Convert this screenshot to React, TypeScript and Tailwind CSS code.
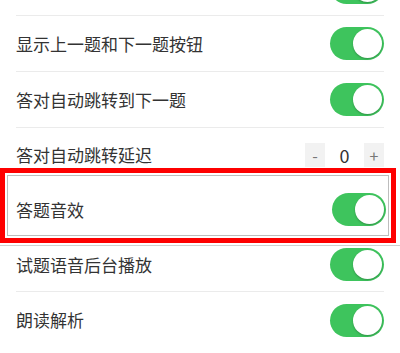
import React, { useState } from "react";

const font = { fontFamily: '"Noto Sans CJK SC", "Noto Sans", sans-serif' };

function Toggle({ on, onClick }: { on: boolean; onClick: () => void }) {
  return (
    <button
      onClick={onClick}
      className={`relative w-[54px] h-[33px] rounded-full shrink-0 transition-colors ${on ? "bg-[#3ec45d]" : "bg-[#e5e5e5]"}`}
    >
      <span
        className={`absolute top-[2px] w-[29px] h-[29px] rounded-full bg-white shadow-[0_1px_2px_rgba(0,0,0,0.25)] transition-all ${on ? "left-[23px]" : "left-[2px]"}`}
      />
    </button>
  );
}

export default function App() {
  const [flags, setFlags] = useState<Record<string, boolean>>({
    top: true, nav: true, jump: true, sound: true, bg: true, read: true,
  });
  const [delay, setDelay] = useState(0);
  const flip = (k: string) => setFlags({ ...flags, [k]: !flags[k] });

  return (
    <div className="w-[400px] h-[353px] overflow-hidden bg-white text-[#333] text-[17px]" style={font}>
      <div className="-mt-[40px]">
        {/* row scrolled off the top, only its toggle's edge shows */}
        <div className="mx-4 h-[56px] flex items-center justify-end border-b border-[#ebebeb]">
          <Toggle on={flags.top} onClick={() => flip("top")} />
        </div>
        <div className="mx-4 h-[56px] flex items-center justify-between border-b border-[#ebebeb]">
          <span>显示上一题和下一题按钮</span>
          <Toggle on={flags.nav} onClick={() => flip("nav")} />
        </div>
        <div className="mx-4 h-[56px] flex items-center justify-between border-b border-[#ebebeb]">
          <span>答对自动跳转到下一题</span>
          <Toggle on={flags.jump} onClick={() => flip("jump")} />
        </div>
        <div className="mx-4 h-[40px] pt-[15px] flex items-start justify-between">
          <span className="leading-[24px]">答对自动跳转延迟</span>
          <div className="flex items-center">
            <button onClick={() => setDelay(Math.max(0, delay - 1))} className="w-[20px] h-[24px] bg-[#f2f2f2] text-[#777] text-[16px] leading-[24px]">-</button>
            <span className="w-[39px] text-center text-[18px] leading-[24px]">{delay}</span>
            <button onClick={() => setDelay(delay + 1)} className="w-[20px] h-[24px] bg-[#f2f2f2] text-[#777] text-[16px] leading-[24px]">+</button>
          </div>
        </div>
      </div>

      {/* highlighted row */}
      <div className="w-[396px] h-[75px] border-[5px] border-[#fe0000] p-[2px]">
        <div className="h-full border border-[#bdbdbd] pt-[8px] pl-[8px] pr-[2px] flex items-center justify-between">
          <span>答题音效</span>
          <Toggle on={flags.sound} onClick={() => flip("sound")} />
        </div>
      </div>
      <div className="mt-[2px] h-px bg-[#cfcfcf]" />

      <div className="mx-4 h-[46px] pt-[2px] flex items-start justify-between border-b border-[#ebebeb]">
        <span className="leading-[33px]">试题语音后台播放</span>
        <Toggle on={flags.bg} onClick={() => flip("bg")} />
      </div>
      <div className="mx-4 h-[56px] flex items-center justify-between">
        <span>朗读解析</span>
        <Toggle on={flags.read} onClick={() => flip("read")} />
      </div>
    </div>
  );
}
